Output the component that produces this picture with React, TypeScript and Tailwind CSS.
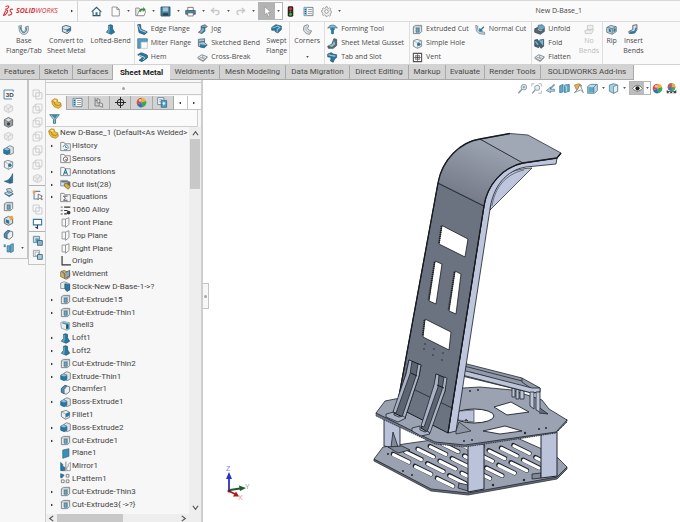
import type { ReactNode } from "react";
import clsx from "clsx";

const BLUE = "#2878a2";
const PALE = "#8fc0d8";
const DARK = "#3f4d57";
const GREY = "#8b9298";

/* All glyphs are drawn on a 16 x 16 grid. */
const glyphs: Record<string, ReactNode> = {
  home: (
    <>
      <path d="M3 8v6h10V8" fill="#fff" stroke={DARK} strokeWidth="1.5" />
      <path d="M1 8.500 8 2l7 6.500" fill="none" stroke="#2a5f80" strokeWidth="1.800" />
      <path d="M6.500 9h3v5h-3z" fill={BLUE} />
    </>
  ),
  page: <path d="M3 1.500h7l3.500 3.500v9.500H3zM10 1.500V5h3.500" fill="#fff" stroke="#8a8a8a" strokeWidth="1.300" />,
  open: (
    <>
      <path d="M1 14V3h5l1 2h6v9z" fill="#e9e9e9" stroke="#8a8a8a" strokeWidth="1.300" />
      <path d="M3 14l3-7h10l-3 7z" fill="#fff" stroke="#777" />
      <path d="M6 8c0-4 3-5 6-4V1.500L15.500 5 12 8V6c-2-.5-3 0-4 3z" fill="#3e8c3e" />
    </>
  ),
  save: (
    <>
      <path d="M1.500 1.500h13v13h-13z" fill="#3d81a5" stroke="#355566" strokeWidth="1.400" />
      <path d="M4 2h8v6H4z" fill="#9fc4d7" />
      <path d="M4 10.500h8V14H4z" fill="#294554" />
    </>
  ),
  print: (
    <>
      <path d="M4 2h8v5H4z" fill="#fff" stroke="#666" strokeWidth="1.200" />
      <path d="M1 6.500h14V12H1z" fill="#4c84a3" stroke="#37505d" />
      <path d="M4 10h8v4.500H4z" fill="#fff" stroke="#555" />
    </>
  ),
  undo: <path d="M6 3 2 6.500 6 10M2.500 6.500H10c4 0 4 6 0 6H8" fill="none" stroke="#c9c9c9" strokeWidth="2" />,
  redo: <path d="M10 3l4 3.500-4 3.500M13.500 6.500H6c-4 0-4 6 0 6" fill="none" stroke="#c9c9c9" strokeWidth="2" />,
  cursor: <path d="M4 1v12l3-3 2 5 2.200-1L9 9.500h4z" fill="#fff" stroke="#888" strokeWidth=".8" />,
  traffic: (
    <>
      <rect x="4" y=".5" width="8" height="15" rx="2" fill="#222" />
      <circle cx="8" cy="4" r="2.200" fill="#d23a32" />
      <circle cx="8" cy="8" r="1.600" fill="#8a7430" />
      <circle cx="8" cy="12" r="2.200" fill="#3fae49" />
    </>
  ),
  list: (
    <>
      <path d="M1.500 2h13v12h-13z" fill="#fff" stroke="#667985" strokeWidth="1.300" />
      <path d="M2 2h4v12H2z" fill={PALE} />
      <path d="M2.500 5h2M2.500 8h2M2.500 11h2" stroke="#226489" strokeWidth="1.500" />
      <path d="M7.500 5h5.500M7.500 8h5.500M7.500 11h5.500" stroke={GREY} strokeWidth="1.300" />
    </>
  ),
  gear: (
    <>
      <path
        d="M7 1h2l.4 2 1.700.7 1.700-1.200 1.500 1.500-1.200 1.700.7 1.700 2 .4v2l-2 .4-.7 1.500 1.200 1.800-1.500 1.400-1.700-1.100-1.700.7L9 15H7l-.4-1.500-1.700-.7-1.700 1.100L1.700 12.500l1.200-1.800-.7-1.500-1.700-.4v-2l1.700-.4.7-1.700L1.700 4l1.500-1.500 1.700 1.200L6.600 3z"
        fill="#f2f2f2"
        stroke="#858585"
      />
      <circle cx="8" cy="8" r="2.600" fill="#fff" stroke="#858585" strokeWidth="1.200" />
    </>
  ),
  baseFlange: (
    <>
      <path d="M1 3l4-1v6c1 4 5 4 6 0V4l4-1v6c-1 8-11 8-13 1z" fill="#d5dce0" stroke="#6b7880" />
      <path d="M3 4l2 6c2 4 6 3 7-1V5" fill="none" stroke={BLUE} strokeWidth="1.400" />
    </>
  ),
  convert: (
    <>
      <path d="M2 4l5-2 7 2v6l-5 4-7-3z" fill="#dbe2e6" stroke={DARK} strokeWidth="1.200" />
      <path d="M2 6l6 2 6-3v4l-6 3V9L2 7z" fill={BLUE} />
    </>
  ),
  loft: (
    <>
      <path d="M5 2l3-1 3 1v5l3 5-5 3-7-3 3-4z" fill={BLUE} stroke="#245166" />
      <path d="M5 3v6l-2 3 3 1 1-4V3z" fill="#73a7bf" />
    </>
  ),
  edge: (
    <>
      <path d="M1 1l4-.5 1 7 9 4-4 4-8-3z" fill={BLUE} stroke="#244a5d" />
      <path d="M2 2l3 7 8 3" fill="none" stroke="#a6cadc" strokeWidth="1.500" />
    </>
  ),
  miter: (
    <>
      <path d="M1 1h14v4H5v10H1z" fill="#5b9dbe" stroke="#397691" />
      <path d="M6 6h9v9H6z" fill="#fff" stroke="#aabac2" />
    </>
  ),
  hem: (
    <>
      <path d="M1 4l5-3 8 3c3 2 2 5-1 6l-6 4-4-2 5-4z" fill={BLUE} stroke="#1e4a60" />
      <path d="M3 5l6 2c3 1 3 2 0 4" fill="none" stroke="#d3e4ec" strokeWidth="1.400" />
    </>
  ),
  jog: (
    <>
      <path d="M6 3l6-2 3 3-4 2v4l-4 4-5-2 4-3V5z" fill="#9caab2" stroke={DARK} />
      <path d="M6 5h5v5l-4 3" fill="none" stroke={BLUE} strokeWidth="2" />
    </>
  ),
  sketchBend: (
    <>
      <path d="M2 2l9-1v6l4 3-4 4-9-2z" fill="#b8c4cb" stroke={DARK} />
      <path d="M3 6l8-1M5 10l8 1-3 3-5-1z" fill={BLUE} stroke={BLUE} strokeWidth="1.500" />
    </>
  ),
  sheet: (
    <>
      <path d="M1 8l6-4 8 3-6 6z" fill="#f1f1f1" stroke="#78838a" strokeWidth="1.300" />
      <path d="M4 8l8 1M8 5l1 6M1 9.500l8 4.500 6-6" fill="none" stroke="#78838a" />
    </>
  ),
  swept: (
    <>
      <path d="M1 5l6-4 8 2v5l-5 5-4-2V9L1 9z" fill={BLUE} stroke="#285269" />
      <path d="M2 6l8-3 3 2-4 3v4" fill="none" stroke="#9bc5d8" strokeWidth="1.500" />
    </>
  ),
  corners: (
    <>
      <path d="M3 3l5-2 2 2c-3 3-2 6 4 7l-3 5C3 14 1 9 3 3z" fill="#e0e2e4" stroke="#7c848a" strokeWidth="1.300" />
      <path d="M6 4c-1 5 1 8 6 8" fill="none" stroke="#9da4a9" />
    </>
  ),
  forming: (
    <>
      <path d="M1 6c3-6 11-6 14 0l-4-1v3H5V5z" fill="#86b6cd" stroke="#3c718b" />
      <path d="M6 5h4v9l-2 1-2-1z" fill={BLUE} />
    </>
  ),
  gusset: (
    <>
      <path d="M10 1l4 1v9l-5 4H2l-1-3 6-3z" fill="#5c6a73" stroke="#37434b" />
      <path d="M10 3c0 5-3 8-8 8l5 2 5-4z" fill={PALE} />
    </>
  ),
  tabSlot: (
    <>
      <path d="M1 3l5-2 3 2 5 1v4l-3 2-2 5-4-2 1-5-5-1z" fill={BLUE} stroke="#2b5267" />
      <path d="M2 4l4 1 6 1" stroke="#b1d2e1" strokeWidth="1.500" />
    </>
  ),
  cut: (
    <>
      <path d="M2 4l3-2h9v9l-3 3H2z" fill="#e5e8ea" stroke="#69747b" strokeWidth="1.200" />
      <path d="M3 4.500h8V14M11 4l3-2" fill="none" stroke="#939ca2" />
      <path d="M6 6h4v6H6z" fill="#6fa9c6" stroke="#356b85" />
    </>
  ),
  hole: (
    <>
      <path d="M2 4l5-2 7 2v8l-6 3-6-3z" fill="#eef0f1" stroke="#727c82" strokeWidth="1.200" />
      <path d="M2 4l6 3 6-3M8 7v8" fill="none" stroke="#9ba3a8" />
      <circle cx="10" cy="9" r="2.600" fill={BLUE} />
    </>
  ),
  vent: (
    <>
      <path d="M2 2h12v12H2z" fill="#fff" stroke="#545454" strokeWidth="1.600" />
      <path d="M5 5h6v6H5zM8 3v10M3 8h10" fill="none" stroke="#565656" />
      <path d="M6.500 6.500h3v3h-3z" fill="#444" />
    </>
  ),
  normal: (
    <>
      <path d="M1 2l3 1v5l4 3 6 1v3l-8-1-4-4z" fill="#ccd6dc" stroke="#6b7880" />
      <path d="M13 4l-5 5M7 6v4h4" fill="none" stroke={BLUE} strokeWidth="1.800" />
    </>
  ),
  unfold: (
    <>
      <path d="M1 7l4-2v4l5 2 5-4v4l-6 4-8-3z" fill="#56666f" stroke="#344149" />
      <path d="M6 2l6-1 3 3v3l-6 2-3-2z" fill="#71a8c4" stroke="#355e73" />
    </>
  ),
  fold: (
    <>
      <path d="M1 3l4-1 3 4V3l6-1v10l-4 3-3-5v4l-6-2z" fill="#466171" stroke="#324853" />
      <path d="M8 3l4 5V3M2 5l4 5" stroke="#7dbddd" strokeWidth="2" />
    </>
  ),
  noBends: <path d="M5 2h8v5l-3 2H5zM1 10l4-2h9l-3 6H2z" fill="#eee" stroke="#c9c9c9" strokeWidth="1.300" />,
  rip: (
    <>
      <path d="M1 5l6-3 8 2v7l-6 4-8-3z" fill="#c1d1da" stroke="#52616a" />
      <path d="M2 5l7 2 5-3M9 7v7" fill="none" stroke="#425965" />
      <path d="M4 7l3 1v4l-3-1zM11 7l3-1v4l-3 2z" fill={BLUE} />
    </>
  ),
  insert: (
    <>
      <path d="M7 2l6-1v7l-3 5-8 1-1-3 6-3z" fill="#dce1e4" stroke="#46535b" strokeWidth="1.200" />
      <path d="M2 11l7-1 2-5 2 1-3 7-7 1z" fill={BLUE} />
    </>
  ),
  threeD: (
    <>
      <path d="M15 4V1.500H1.500v13H13" fill="none" stroke="#4d87a5" strokeWidth="1.400" />
      <text x="4" y="11.500" fontSize="9" fontWeight="700" fontFamily="Liberation Sans, sans-serif" fill="#444">3D</text>
    </>
  ),
  ghost: (
    <>
      <path d="M2 5l6-3 6 3v6l-6 3-6-3z" fill="#ededed" stroke="#cdcdcd" strokeWidth="1.300" />
      <path d="M2 5l6 3 6-3M8 8v6M4 12l8-8" fill="none" stroke="#cdcdcd" />
    </>
  ),
  darkCube: (
    <>
      <path d="M2 4l6-3 6 3v8l-6 3-6-3z" fill="#9b9fa2" stroke="#5b6063" strokeWidth="1.200" />
      <path d="M2 4l6 3 6-3-6-3z" fill="#e0e2e3" stroke="#6a6f72" />
      <circle cx="8" cy="10" r="2.400" fill="#3f4447" />
    </>
  ),
  boss: (
    <>
      <path d="M6 3l4-2 5 2v9l-5 2-4-2z" fill="#dfe5e8" stroke="#6b767d" strokeWidth="1.100" />
      <path d="M1 6l4-2 5 2v6l-4 2-5-2z" fill={BLUE} stroke="#245d7b" />
      <path d="M1 6l5 2 4-2-5-2z" fill={PALE} />
    </>
  ),
  chamfer: (
    <>
      <path d="M2 6l5-4 7 2v7l-5 4-7-3z" fill="#edf0f2" stroke="#606c73" strokeWidth="1.200" />
      <path d="M2 7l5-5 3 1-4 5v6l-4-2z" fill="#4d91b3" stroke="#3a5c6c" />
    </>
  ),
  rib: <path d="M14 1v13l-4 1-8-3c6-1 9-4 12-11zM10 9v6" fill={BLUE} stroke="#3b515d" />,
  bentPlate: (
    <>
      <path d="M2 9l6-3 7 4-6 4zM5 3l6-1 3 5-6 2z" fill="#cfdae0" stroke="#5a7483" strokeWidth="1.200" />
      <path d="M3 10l6 3 5-3" fill="none" stroke={BLUE} strokeWidth="1.600" />
    </>
  ),
  wizard: (
    <>
      <path d="M2 5l6-3 6 3v7l-6 3-6-3z" fill="#d8dee1" stroke="#4b565c" strokeWidth="1.200" />
      <path d="M4 6l5 2v5l-5-2z" fill={BLUE} />
      <path d="M8 2l6-1 1 4-4 3z" fill="#e9a739" />
    </>
  ),
  planeBlue: <path d="M4 3l9-2v11l-9 3z" fill="#3b8eb5" stroke="#286a8c" />,
  refPlane: (
    <>
      <path d="M6 4h4v9H6zM11 2l4-1v11l-4 2z" fill="#66a8c6" stroke="#2e6e8d" />
      <path d="M1 2h3v4H1z" fill="#4b8faf" />
    </>
  ),
  wire: <path d="M1.500 5.500h9v9h-9zM5.500 1.500h9v9h-9zM1.500 5.500l4-4M10.500 14.500l4-4" fill="none" stroke="#c6c8ca" strokeWidth="1.200" />,
  wireFilled: (
    <path d="M1.500 1.500h9v9h-9zM5.500 5.500h9v9h-9z" fill="#f7f7f7" stroke="#c6c8ca" strokeWidth="1.300" />
  ),
  sketchCursor: (
    <>
      <path d="M12 2H3v11h6" fill="none" stroke="#5e8599" strokeWidth="1.500" />
      <path d="M9 6v8l2-2 4 2-2-4 2-1z" fill="#fff" stroke="#444" />
      <path d="M1 1h4v4H1z" fill="#e6a95a" />
    </>
  ),
  monitor: (
    <>
      <path d="M2 2h12v8H2z" fill="#fff" stroke="#39789a" strokeWidth="1.600" />
      <path d="M8 10v5l-3-2" fill="none" stroke="#333" strokeWidth="1.600" />
    </>
  ),
  group: (
    <>
      <path d="M2 2h9v9H2z" fill="#c7dbe5" stroke="#597f93" strokeWidth="1.200" />
      <path d="M5 5h5v5H5z" fill="#5e98b6" />
      <path d="M8 8h7v7H8z" fill="#8bb5ca" stroke="#32647e" strokeWidth="1.200" />
    </>
  ),
  ungroup: (
    <>
      <path d="M2 2h9v9H2z" fill="#f3f3f3" stroke="#8b979e" strokeWidth="1.200" />
      <path d="M4.500 4.500h5v5h-5z" fill="#fff" stroke="#8b979e" />
      <path d="M8 8h7v7H8z" fill="#a9cadb" stroke="#32647e" strokeWidth="1.200" />
    </>
  ),
  part: (
    <>
      <path d="M1 4l4-3 4 1 1 4 4 1 1 5-4 3-6-2-3-4z" fill="#edbd38" stroke="#a27a1c" />
      <path d="M2 5l3 1 1 4 5 1 3-2" fill="none" stroke="#a87b18" strokeWidth="1.200" />
      <circle cx="6" cy="4" r="1.300" fill="#fff0a8" />
    </>
  ),
  config: (
    <>
      <path d="M3 1v12h6M3 5h5" fill="none" stroke="#777" strokeWidth="1.300" />
      <path d="M6 2l4 2v4l-4 1zM9 8l5 2v5l-5-2z" fill="#ddd" stroke="#666" />
    </>
  ),
  target: (
    <>
      <circle cx="8" cy="8" r="4.800" fill="none" stroke="#222" strokeWidth="1.400" />
      <path d="M8 0v16M0 8h16" stroke="#222" strokeWidth="1.400" />
    </>
  ),
  ball: (
    <>
      <path d="M8 8V1a7 7 0 0 1 6.600 4.700z" fill="#f0b32f" />
      <path d="M8 8l6.600-2.300A7 7 0 0 1 9 15z" fill="#3fa45c" />
      <path d="M8 8l1 7a7 7 0 0 1-7.500-4.500z" fill="#356fae" />
      <path d="M8 8L1.500 10.500A7 7 0 0 1 8 1z" fill="#d84b3e" />
      <circle cx="6" cy="5" r="2" fill="#fff" opacity=".65" />
    </>
  ),
  scene: (
    <>
      <circle cx="8" cy="6" r="5.500" fill="#3f77b5" />
      <path d="M8 6V.5A5.500 5.500 0 0 1 13.500 7z" fill="#efb138" />
      <path d="M8 6L2.500 7A5.500 5.500 0 0 1 8 .5z" fill="#d95247" />
      <path d="M8 6l5.500 1A5.500 5.500 0 0 1 8 11.500z" fill="#47a65d" />
      <path d="M1 10v5h14v-5l-3 2H4z" fill="#444" />
      <path d="M4 13h2v2H4zM9 13h2v2H9z" fill="#fff" />
    </>
  ),
  sheets: (
    <>
      <path d="M1 1h9v10H1z" fill="#fff" stroke="#58788a" strokeWidth="1.200" />
      <path d="M3 4h5M3 7h4" stroke="#58788a" />
      <path d="M6 5h8v10H6z" fill="#4e9bc2" stroke="#286684" />
      <path d="M8 9h4M10 7v5" stroke="#fff" strokeWidth="1.500" />
    </>
  ),
  filter: (
    <>
      <path d="M1 2.500h14L9.500 9v6h-3V9z" fill="#eaf3f7" stroke="#48707f" strokeWidth="1.400" />
      <path d="M3 3h10L9 8v6H8V8z" fill="#3d86aa" />
    </>
  ),
  origin: <path d="M3 1v12h12M3 13h.1" fill="none" stroke="#333" strokeWidth="1.700" strokeLinecap="square" />,
  alloy: (
    <>
      <path d="M1 3h3M1 8h3M1 13h3" stroke="#888" strokeWidth="2" />
      <path d="M6 3h9M6 8h5M6 13h4" stroke="#333" strokeWidth="1.800" />
      <circle cx="12.500" cy="11" r="2.700" fill="#333" />
    </>
  ),
  plane: <path d="M8 3H3v10h5M8 3l5-2v10l-5 4z" fill="none" stroke="#85898c" strokeWidth="1.200" />,
  cutList: (
    <>
      <path d="M1 2h10v8H1z" fill="#dce3e7" stroke="#66737b" />
      <path d="M2 3h8v2H2z" fill="#486b7e" />
      <path d="M6 7l4-1 5 5-3 4-5-4z" fill="#e2aa3b" stroke="#75561d" />
      <path d="M11 3l4 1v7l-4-3z" fill="#5e6b72" />
    </>
  ),
  weld: (
    <>
      <path d="M1 4l5-2 8 4v6l-5 3-8-4z" fill="#e2b34c" stroke="#6d592d" />
      <path d="M2 3l5 4v7M8 5l6-3v8l-5 3" fill="#92a6b2" stroke="#52636e" strokeWidth="1.300" />
    </>
  ),
  stock: (
    <>
      <path d="M1 3l5-2 8 3v9l-4 2-3-4H1z" fill="#e8edef" stroke="#667780" />
      <path d="M7 4l7 1v8l-4 2-3-4z" fill={BLUE} stroke="#235873" />
    </>
  ),
  shell: (
    <>
      <path d="M1 4l4-2 9 2v9l-4 2-8-3z" fill="#e8edef" stroke="#7b8a92" />
      <path d="M4 3l9 2v8l-4 1V7L3 5z" fill="#4f9bbf" />
      <path d="M9 7l3-1v6l-3 1z" fill="#1d506a" />
    </>
  ),
  fillet: (
    <>
      <path d="M2 4l7-2 5 3v7l-6 3-6-4z" fill="#edf0f2" stroke="#68747b" strokeWidth="1.200" />
      <path d="M8 7l6-3v4c-1 2-2 3-5 4z" fill={BLUE} />
      <path d="M2 4l6 3v7" fill="none" stroke="#85929a" />
    </>
  ),
  mirror: (
    <>
      <path d="M1 2l3 3v3l3 1v5H1z" fill={BLUE} stroke="#23617f" />
      <path d="M8.500 1v14" stroke="#555" />
      <path d="M15 2l-3 3v3l-2 1v5h5z" fill="#fff" stroke="#777" />
    </>
  ),
  pattern: (
    <>
      <path d="M1 1l5 2-3 4H1z" fill={BLUE} stroke="#23617f" />
      <path d="M9 2h4v4H9zM2 10h4v4H2zM9 10h4v4H9z" fill="#fff" stroke="#777" strokeWidth="1.300" />
    </>
  ),
  zoomFit: (
    <>
      <circle cx="10" cy="6" r="4" fill="#e6f1f6" stroke="#8297a1" strokeWidth="1.300" />
      <path d="M7 9l-5 6" stroke="#8297a1" strokeWidth="2" />
      <path d="M8 6h4M10 4v4" stroke="#4a87a4" />
    </>
  ),
  zoomArea: (
    <>
      <path d="M1 5V1h4M11 1h4v4M15 11v4h-4" fill="none" stroke="#a3b3bb" strokeWidth="1.200" />
      <circle cx="9" cy="7" r="3.700" fill="#e6f1f6" stroke="#8297a1" strokeWidth="1.300" />
      <path d="M6 10l-4 5" stroke="#8297a1" strokeWidth="2" />
    </>
  ),
  prevView: (
    <>
      <path d="M14 2L7 9" stroke="#7b9dad" strokeWidth="2.500" />
      <path d="M8 6l-6 5 6 3v-2h6V9H8z" fill="#b8d3df" stroke="#52798b" />
    </>
  ),
  section: (
    <>
      <path d="M1 4l5-2v11l-5 1zM8 3l7-1v10l-7 2z" fill="#5faccb" stroke="#366f88" />
      <path d="M8 4l3 1v8" fill="none" stroke="#d6e7ef" />
    </>
  ),
  dynamic: (
    <>
      <path d="M2 3l7-2 4 3-8 6z" fill="#efad4a" stroke="#a87834" />
      <path d="M2 14l5-5 3-7 5 12-4-4z" fill="#fff" stroke="#6b8795" strokeWidth="1.200" />
    </>
  ),
  display: (
    <>
      <path d="M1 5l4-3h10v9l-4 4H1z" fill="#bedbe7" stroke="#567c8e" strokeWidth="1.200" />
      <path d="M2 6h8v8H2z" fill="#5ba8c9" />
      <path d="M10 6l4-4M10 6v8" stroke="#436d80" />
    </>
  ),
  styleCube: (
    <>
      <path d="M2 3l6-2 6 2v9l-6 3-6-3z" fill="#a4d1e2" stroke="#547f92" strokeWidth="1.200" />
      <path d="M8 5l6-2v9l-6 3z" fill="#e6f0f4" stroke="#547f92" />
    </>
  ),
  eye: (
    <>
      <path d="M1 8c4-6 10-6 14 0-4 5-10 5-14 0z" fill="#fff" stroke="#555" />
      <circle cx="8" cy="7.800" r="3" fill="#222" />
    </>
  ),
};

const folder = (mark: ReactNode) => (
  <>
    <path d="M1 14V2h5l1 2h8v10z" fill="#f7f7f7" stroke="#82878a" strokeWidth="1.300" />
    {mark}
  </>
);
glyphs.history = folder(<path d="M8 7v2.500h2M4.500 9a3.700 3.700 0 1 1 1 2.800" fill="none" stroke="#3a7897" strokeWidth="1.300" />);
glyphs.sensors = folder(
  <>
    <circle cx="8" cy="9" r="3.200" fill="#fff" stroke="#555" strokeWidth="1.200" />
    <path d="M8 9l2 2" stroke="#d04a3b" strokeWidth="1.800" />
  </>
);
glyphs.annotations = folder(<path d="M5 13l3-8 3 8M6 10h4" fill="none" stroke="#23739f" strokeWidth="1.500" />);
glyphs.equations = folder(<path d="M11 6H5l3 3-3 3h6" fill="none" stroke="#444" strokeWidth="1.300" />);

function Glyph({ name }: { name: string }) {
  return (
    <svg viewBox="0 0 16 16" className="size-[11px] shrink-0" fill="none" aria-hidden="true">
      {glyphs[name]}
    </svg>
  );
}

function Caret() {
  return (
    <svg viewBox="0 0 4 3" className="h-[2px] w-[3px] shrink-0" aria-hidden="true">
      <path d="M0 0h4L2 3z" fill="#555" />
    </svg>
  );
}

function Arrow({ dir }: { dir: "left" | "right" }) {
  return (
    <svg viewBox="0 0 3 4" className="h-1 w-[2px] shrink-0" aria-hidden="true">
      <path d={dir === "right" ? "M0 0v4l3-2z" : "M3 0v4L0 2z"} fill="#222" />
    </svg>
  );
}

function Chevron({ d }: { d: string }) {
  return (
    <svg viewBox="0 0 8 8" className="size-[7px] shrink-0" aria-hidden="true">
      <path d={d} fill="none" stroke="#555" strokeWidth="1.400" />
    </svg>
  );
}

const quickActions = ["page", "open", "save", "print", "undo", "redo"];

function TitleBar() {
  return (
    <header className="flex h-[22px] shrink-0 items-center border-y border-t-[#d9d9d9] border-b-[#dcdcdc] bg-[#fafafa]">
      <div className="flex h-full w-[78px] items-center border-r border-[#d4d4d4] pl-[3px]">
        <svg viewBox="0 0 22 24" className="h-[12px] w-[11px]" aria-hidden="true">
          <path
            d="M5 3c4-2 8-1 6 2-1 2-4 3-6 3M4 10c6-1 7 3 2 8-1 2-4 3-5 3l4-9M20 9c-4-2-8 1-5 4 5 4 2 8-5 7"
            fill="none"
            stroke="#d6343a"
            strokeWidth="2.200"
          />
        </svg>
        <span className="ml-[2px] text-[7px] italic text-[#d6343a]">
          <b>SOLID</b>WORKS
        </span>
        <button aria-label="Show menu" className="mr-1 ml-auto">
          <Arrow dir="right" />
        </button>
      </div>
      <button aria-label="Home" className="mr-[2px] ml-[13px]">
        <Glyph name="home" />
      </button>
      <div className="ml-1 flex items-center">
        {quickActions.map((name) => (
          <button key={name} aria-label={name} className="flex w-[25px] items-center gap-[6px] pl-[2px]">
            <Glyph name={name} />
            <Caret />
          </button>
        ))}
      </div>
      <button aria-label="Select" className="flex h-[18px] border border-[#b5b5b5]">
        <span className="flex h-full w-4 items-center justify-center bg-[#b3b3b3]">
          <Glyph name="cursor" />
        </span>
        <span className="flex h-full w-[7px] items-center justify-center bg-white">
          <Caret />
        </span>
      </button>
      <div className="ml-[2px] flex items-center gap-[7px]">
        <button aria-label="Rebuild"><Glyph name="traffic" /></button>
        <button aria-label="File properties"><Glyph name="list" /></button>
        <button aria-label="Options" className="flex items-center gap-[6px]">
          <Glyph name="gear" />
          <Caret />
        </button>
      </div>
      <h1 className="mr-[98px] ml-auto text-[7px] text-[#444]">New D-Base_1</h1>
    </header>
  );
}

function BigTool({ icon, lines, menu, disabled }: { icon: string; lines: string[]; menu?: boolean; disabled?: boolean }) {
  return (
    <button
      disabled={disabled}
      className={clsx("flex flex-col items-center self-start leading-[10px]", disabled && "text-[#bcbcbc]")}
    >
      <span className="flex h-[14px] items-center">
        <Glyph name={icon} />
      </span>
      {lines.map((line) => (
        <span key={line}>{line}</span>
      ))}
      {menu && (
        <span className="mt-[10px]">
          <Caret />
        </span>
      )}
    </button>
  );
}

function ToolColumn({ tools }: { tools: [string, string][] }) {
  return (
    <div className="flex flex-col">
      {tools.map(([icon, label]) => (
        <button key={label} className="flex h-[14px] items-center gap-[3px]">
          <Glyph name={icon} />
          {label}
        </button>
      ))}
    </div>
  );
}

function Group({ children, className }: { children: ReactNode; className?: string }) {
  return <div className={clsx("flex h-full border-r border-[#dedede]", className)}>{children}</div>;
}

function Ribbon() {
  return (
    <div className="flex h-[43px] shrink-0 overflow-hidden border-b border-[#d2d2d2] bg-[#fafafa] text-[7px] whitespace-nowrap text-[#4a4a4a]">
      <Group className="gap-[5px] pr-[3px] pl-[6px]">
        <BigTool icon="baseFlange" lines={["Base", "Flange/Tab"]} />
        <BigTool icon="convert" lines={["Convert to", "Sheet Metal"]} />
        <BigTool icon="loft" lines={["Lofted-Bend"]} />
      </Group>
      <Group className="gap-[6px] px-[2px]">
        <ToolColumn tools={[["edge", "Edge Flange"], ["miter", "Miter Flange"], ["hem", "Hem"]]} />
        <ToolColumn tools={[["jog", "Jog"], ["sketchBend", "Sketched Bend"], ["sheet", "Cross-Break"]]} />
        <BigTool icon="swept" lines={["Swept", "Flange"]} />
      </Group>
      <Group className="px-1">
        <BigTool icon="corners" lines={["Corners"]} menu />
      </Group>
      <Group className="pr-[5px] pl-[2px]">
        <ToolColumn tools={[["forming", "Forming Tool"], ["gusset", "Sheet Metal Gusset"], ["tabSlot", "Tab and Slot"]]} />
      </Group>
      <Group className="gap-[6px] pr-[5px] pl-[2px]">
        <ToolColumn tools={[["cut", "Extruded Cut"], ["hole", "Simple Hole"], ["vent", "Vent"]]} />
        <ToolColumn tools={[["normal", "Normal Cut"]]} />
      </Group>
      <Group className="gap-2 pr-[3px] pl-[2px]">
        <ToolColumn tools={[["unfold", "Unfold"], ["fold", "Fold"], ["sheet", "Flatten"]]} />
        <BigTool icon="noBends" lines={["No", "Bends"]} disabled />
      </Group>
      <div className="flex gap-[6px] pl-[3px]">
        <BigTool icon="rip" lines={["Rip"]} />
        <BigTool icon="insert" lines={["Insert", "Bends"]} />
      </div>
    </div>
  );
}

const commandTabs = [
  { label: "Features", width: "w-[40px]" },
  { label: "Sketch", width: "w-[33px]" },
  { label: "Surfaces", width: "w-[40px]" },
  { label: "Sheet Metal", width: "w-[57px]" },
  { label: "Weldments", width: "w-[50px]" },
  { label: "Mesh Modeling", width: "w-[66px]" },
  { label: "Data Migration", width: "w-[64px]" },
  { label: "Direct Editing", width: "w-[59px]" },
  { label: "Markup", width: "w-[37px]" },
  { label: "Evaluate", width: "w-[39px]" },
  { label: "Render Tools", width: "w-[56px]" },
  { label: "SOLIDWORKS Add-Ins", width: "w-[93px]" },
];

function CommandTabs() {
  return (
    <nav className="flex h-[15px] shrink-0 bg-white font-[Roboto,sans-serif] text-[8px] whitespace-nowrap">
      {commandTabs.map(({ label, width }) => (
        <button
          key={label}
          className={clsx(
            "flex shrink-0 items-center justify-center",
            width,
            label === "Sheet Metal"
              ? "bg-[#fafafa] font-bold text-[#222]"
              : "border-r border-b border-r-[#a9a9a9] border-b-[#a9a9a9] bg-[#d3d3d3] text-[#4a4a4a]"
          )}
        >
          {label}
        </button>
      ))}
    </nav>
  );
}

const featureTools = [
  "threeD", "ghost", "darkCube", "ghost", "boss", "hole", "rib", "bentPlate", "cut", "wizard", "chamfer", "refPlane",
];
const viewTools = ["wireFilled", "wire", "wire", "wire", "wire", "wire", "ghost"];

function ToolStrips() {
  return (
    <>
      <div className="flex w-7 shrink-0 flex-col self-start border-r border-b border-[#c4c4c4] pt-[7px] pb-[3px]">
        {featureTools.map((name, i) => (
          <button key={i} aria-label={`Feature tool ${i + 1}`} className="flex h-[14px] items-center gap-[7px] pl-[3px]">
            <Glyph name={name} />
            {name === "refPlane" && <Caret />}
          </button>
        ))}
      </div>
      <div className="flex w-[17px] shrink-0 flex-col items-center self-start border-b border-l border-[#c4c4c4] pt-[7px] pb-[3px]">
        {viewTools.map((name, i) => (
          <button key={i} aria-label={`View tool ${i + 1}`} className="flex h-[14px] items-center">
            <Glyph name={name} />
          </button>
        ))}
        <hr className="mb-[2px] w-full border-[#b0b0b0]" />
        <button aria-label="Sketch" className="flex h-[14px] items-center"><Glyph name="sketchCursor" /></button>
        <button aria-label="Drawing" className="flex h-[14px] items-center"><Glyph name="wireFilled" /></button>
        <button aria-label="Screen" className="flex h-[14px] items-center"><Glyph name="monitor" /></button>
        <hr className="my-px w-full border-[#b0b0b0]" />
        <button aria-label="Group" className="flex h-[14px] items-center"><Glyph name="group" /></button>
        <button aria-label="Ungroup" className="flex h-[14px] items-center"><Glyph name="ungroup" /></button>
      </div>
    </>
  );
}

interface TreeItem {
  label: string;
  icon: string;
  expandable?: boolean;
}

const treeItems: TreeItem[] = [
  { label: "History", icon: "history", expandable: true },
  { label: "Sensors", icon: "sensors" },
  { label: "Annotations", icon: "annotations", expandable: true },
  { label: "Cut list(28)", icon: "cutList", expandable: true },
  { label: "Equations", icon: "equations", expandable: true },
  { label: "1060 Alloy", icon: "alloy" },
  { label: "Front Plane", icon: "plane" },
  { label: "Top Plane", icon: "plane" },
  { label: "Right Plane", icon: "plane" },
  { label: "Origin", icon: "origin" },
  { label: "Weldment", icon: "weld" },
  { label: "Stock-New D-Base-1->?", icon: "stock" },
  { label: "Cut-Extrude15", icon: "cut", expandable: true },
  { label: "Cut-Extrude-Thin1", icon: "cut", expandable: true },
  { label: "Shell3", icon: "shell" },
  { label: "Loft1", icon: "loft", expandable: true },
  { label: "Loft2", icon: "loft", expandable: true },
  { label: "Cut-Extrude-Thin2", icon: "cut", expandable: true },
  { label: "Extrude-Thin1", icon: "boss", expandable: true },
  { label: "Chamfer1", icon: "chamfer" },
  { label: "Boss-Extrude1", icon: "boss", expandable: true },
  { label: "Fillet1", icon: "fillet" },
  { label: "Boss-Extrude2", icon: "boss", expandable: true },
  { label: "Cut-Extrude1", icon: "cut", expandable: true },
  { label: "Plane1", icon: "planeBlue" },
  { label: "Mirror1", icon: "mirror" },
  { label: "LPattern1", icon: "pattern" },
  { label: "Cut-Extrude-Thin3", icon: "cut", expandable: true },
  { label: "Cut-Extrude3{ ->?}", icon: "cut", expandable: true },
];

const managerTabs = ["part", "list", "config", "target", "ball", "sheets"];

function FeatureTree() {
  return (
    <aside className="flex min-w-0 flex-1 flex-col border-l border-[#cfcfcf] font-[Roboto,sans-serif] text-[8px] text-[#444]">
      <div className="mt-[2px] flex h-[13px] shrink-0 items-center justify-center border-y border-[#c9c9c9]">
        <span className="size-[3px] rounded-full bg-[#a5a5a5]" />
      </div>
      <div className="mt-px flex h-[14px] shrink-0">
        {managerTabs.map((name) => (
          <button
            key={name}
            aria-label={`${name} manager`}
            className={clsx(
              "flex flex-1 items-center justify-center border-r border-[#a8a8a8]",
              name === "part" ? "bg-[#f7f7f7]" : "border-b bg-[#d3d3d3]"
            )}
          >
            <Glyph name={name} />
          </button>
        ))}
        <button aria-label="Previous" className="flex w-[14px] items-center justify-center border-r border-b border-[#c4c4c4] bg-white">
          <Arrow dir="left" />
        </button>
        <button aria-label="Next" className="flex w-[13px] items-center justify-center border-b border-[#c4c4c4] bg-white">
          <Arrow dir="right" />
        </button>
      </div>
      <label className="mr-[3px] flex h-[17px] shrink-0 items-center border-r border-b border-[#cfcfcf] bg-[#fbfbfb] pl-[3px]">
        <Glyph name="filter" />
        <input aria-label="Filter" className="min-w-0 flex-1 bg-transparent outline-none" />
      </label>
      <div className="flex min-h-0 flex-1">
        <ul className="grid min-w-0 flex-1 auto-rows-fr overflow-hidden whitespace-nowrap pb-[3px]">
          <li className="flex min-h-0 items-center gap-px pl-[2px]">
            <Glyph name="part" />
            New D-Base_1 (Default&lt;As Welded&gt;
          </li>
          {treeItems.map(({ label, icon, expandable }) => (
            <li key={label} className="flex min-h-0 items-center pl-[5px]">
              <span className="flex w-[9px] shrink-0">
                {expandable && (
                  <button aria-label={`Expand ${label}`}>
                    <Arrow dir="right" />
                  </button>
                )}
              </span>
              <Glyph name={icon} />
              <span className="ml-px">{label}</span>
            </li>
          ))}
        </ul>
        <div className="flex w-3 shrink-0 flex-col items-center bg-[#eeeeee]">
          <span className="flex h-3 items-center"><Chevron d="M1 6l3-4 3 4" /></span>
          <span className="h-[50px] w-[10px] bg-[#c8c8c8]" />
          <span className="mt-auto flex h-[14px] items-center"><Chevron d="M1 2l3 4 3-4" /></span>
        </div>
      </div>
      <div className="flex h-2 shrink-0 items-center bg-[#eeeeee] pl-[2px]">
        <Chevron d="M6 1L2 4l4 3" />
        <span className="ml-[2px] h-full w-[66px] bg-[#c8c8c8]" />
        <span className="mr-[14px] ml-auto flex"><Chevron d="M2 1l4 3-4 3" /></span>
      </div>
    </aside>
  );
}

/* Slots of the bottom plate sit on a skewed grid. */
const slots = [0, 1, 2].flatMap((row) =>
  Array.from({ length: 9 }, (_, col) => ({
    x: 401 + row * 22 + col * 12.3,
    y: 458 + row * 12 - col * 2.6,
  })).filter(({ x, y }) => x < 545 && y > 440)
);

function Strut({ d }: { d: string }) {
  return <path d={d} fill="#aab3c5" stroke="#20242c" strokeWidth=".8" />;
}

function Model() {
  return (
    <svg viewBox="203 80 477 442" className="h-full w-full" role="img" aria-label="Sheet metal stand">
      <defs>
        <linearGradient id="bend" x1="0" y1="1" x2="0.5" y2="0">
          <stop offset="0" stopColor="#6a707d" />
          <stop offset="1" stopColor="#9ca3b1" />
        </linearGradient>
        <clipPath id="lowerPlate">
          <path d="M374 459l9-12 49-7 83-3 27 12 16 9 9 9-10 10-89 16-37-4z" />
        </clipPath>
      </defs>

      <g stroke="#20242c" strokeLinejoin="round">
        <path d="M374 459v2l57 30 37 4 89-16 10-10v-2l-10 8-89 16-37-3z" fill="#666d7c" strokeWidth=".7" />
        <path d="M374 459l9-12 49-7 83-3 27 12 16 9 9 9-10 10-89 16-37-4z" fill="#9aa1b0" strokeWidth=".8" />
        <g clipPath="url(#lowerPlate)" strokeLinecap="round">
          {slots.map(({ x, y }) => (
            <g key={`${x}-${y}`}>
              <path d={`M${x - 8} ${y - 4}L${x + 8} ${y + 4}`} strokeWidth="4.600" />
              <path d={`M${x - 7.5} ${y - 3.3}L${x + 8} ${y + 4.300}`} stroke="#fff" strokeWidth="3.200" />
            </g>
          ))}
        </g>
        <path d="M384 416v30l16 3v-27z" fill="#b9c2d8" strokeWidth=".9" />
        <path d="M391 447l2-15 5 15M388 447l14-1 8 4-12 3zM459 483l9 2v6l-10-3zM532 474l9-1v5l-9 1z" fill="#828a9a" strokeWidth=".8" />
        <path d="M468 444h16v45l-16 3zM541 432h16v44l-16 2z" fill="#bac3da" strokeWidth="1" />

        <path d="M376 413v3l59 28 30 3 91-14 11-11v-3l-11 10-91 14-30-2z" fill="#6e7585" strokeWidth=".8" strokeDasharray="1.500 .8" />
        <path
          d="M376 413l9-12 15-3 63-10 17-1 32 3 30 10 7 9 18 11-11 12-91 13-30-3z"
          fill="#9ba2b1"
          strokeWidth=".8"
        />
        <ellipse cx="474" cy="416" rx="20" ry="7" fill="#fff" strokeWidth="1" />
        <path d="M458 412l2-1 14-1v12l-16-2z" fill="#b9c2d8" strokeWidth=".6" />
        <path d="M466 419l2 2h-3z" fill="#555" strokeWidth=".6" />
        <path d="M494 407l17-5 18 10-22 3zM483 431l22-5 17 5-22 3z" fill="#fff" strokeWidth=".9" />
        <path d="M456 431l3-9 12 9-15 3z" fill="#8d95a5" strokeWidth=".7" />
        <g fill="#262a33" stroke="none">
          <circle cx="470" cy="391" r="1" /><circle cx="478" cy="390" r="1" />
          <circle cx="464" cy="441" r="1" /><circle cx="472" cy="440" r="1" />
          <circle cx="539" cy="429" r="1" /><circle cx="546" cy="428" r="1" />
          <circle cx="388" cy="454" r="1" /><circle cx="403" cy="471" r="1" />
          <circle cx="412" cy="475" r="1" /><circle cx="525" cy="433" r="1.200" />
          <circle cx="493" cy="485" r="1.200" /><circle cx="524" cy="480" r="1.200" />
        </g>
      </g>

      <g fill="#bcc5d8" stroke="#20242c" strokeWidth=".8" strokeLinejoin="round">
        <path d="M512 386h3v11h-3zM516 388h3v11h-3zM520 390h4v9h-4z" />
        <path d="M463 363l59 15 18 10v4l-8 1-70-17z" fill="#929aaa" />
        <path d="M464 366l58 15M470 372l62 17M522 378v4l10 7 8-1" fill="none" />
        <path d="M462 370l70 18 8 0v4l-8 1-70-18z" />
        <path d="M530 392h4v17l-4-3zM536 392h4v20l-4-2z" />
        <path d="M540 408l8 6-9-1" fill="#646b79" />
      </g>

      <g stroke="#171a20" strokeLinejoin="round">
        <path d="M532 168l-42 42 1-17c4-13 16-24 41-25z" fill="#bdc6dd" strokeWidth=".7" />
        <path
          d="M561 153l-4 5-34 5c-20 4-36 22-39 43l-36 227 8-2 34-222c3-22 16-39 36-42l30-3 1-6z"
          fill="#bdc6dd"
          strokeWidth=".8"
        />
        <path d="M492 206c3-19 14-32 32-36" fill="none" strokeWidth=".5" />
        <path d="M438 183l46 23-36 227-51-26z" fill="#6c7380" strokeWidth="1" />
        <path d="M480 139C460 142 442 160 438 183l46 23c3-21 19-39 39-43z" fill="url(#bend)" strokeWidth=".7" />
        <path d="M480 139l30-5.500 18 1.500 33 18-4 5-34 5z" fill="#a0a7b5" strokeWidth=".7" />
        <path d="M397 407l41-224c4-23 22-41 42-44l30-5.500M448 433l36-227c3-21 19-39 39-43l34-5 4-5" fill="none" strokeWidth="1.300" />
        <path d="M411 388l41 20" fill="none" strokeWidth=".7" />
      </g>

      <g fill="#fff" stroke="#171a20" strokeWidth=".8">
        <path d="M442 225.500l26 13.500-3 18-26-13zM435 261l7 3-6 40-7-3zM455 271l6 3-5 40-7-3zM425 319l26 13-2 18-26-13z" />
      </g>
      <path
        d="M441.500 226l-2.500 17M434.500 262l-6 38M454.500 272l-6 38M424.500 320l-2 16"
        fill="none"
        stroke="#171a20"
        strokeWidth="1.800"
        strokeDasharray="1 1"
      />
      <g fill="none" stroke="#30353f" strokeWidth=".6">
        <circle cx="425" cy="344" r=".7" /><circle cx="434" cy="349" r=".7" /><circle cx="443" cy="353" r=".7" />
        <circle cx="424" cy="349" r=".7" /><circle cx="433" cy="355" r=".7" /><circle cx="442" cy="360" r=".7" />
      </g>

      <path d="M409 360l12 5-2 11-14 42-11-5 12-39zM436 374l10 4-1 13-16 42-8-5 14-43z" fill="#5e6572" stroke="#171a20" />
      <Strut d="M409 360l3 1-2 13-14 39-3-1 13-38z" />
      <Strut d="M418 364l3 1-2 11-14 42-3-1 14-41z" />
      <Strut d="M436 374l3 1-1 12-14 40-3-1 13-41z" />
      <Strut d="M444 377l3 1-2 13-15 42-3-1 15-42z" />
      <path d="M411 373l6 3M437 385l7 3" stroke="#171a20" />
      <Strut d="M386 414l8-2v3l5 2 4-1 3 2-8 4-12-5z" />
      <Strut d="M412 428l8-2v4l5 2 3-1 2 3-9 2-9-5z" />

      <g strokeWidth="1.800">
        <path d="M229 490v-13" stroke="#2a30c9" />
        <path d="M226 479l3-7 3 7z" fill="#2a30c9" />
        <path d="M230 490l10-1.500" stroke="#1d5b2c" />
        <path d="M239 485.500l7 2.500-6 3z" fill="#1d5b2c" />
        <path d="M229 491l6 3" stroke="#b01919" />
        <path d="M236 491.500l3 5h-6z" fill="#b01919" />
        <circle cx="229" cy="491" r="1.500" fill="#7a1620" />
      </g>
      <g fontFamily="Liberation Sans, sans-serif" fontSize="7">
        <text x="226" y="471" fill="#7c80df">Z</text>
        <text x="245" y="489" fill="#7fae8a">Y</text>
        <text x="238" y="500" fill="#ea8f8f">X</text>
      </g>
    </svg>
  );
}

function ViewToolbar() {
  return (
    <div className="absolute top-[1px] right-[3px] flex h-[14px] items-center">
      {["zoomFit", "zoomArea", "prevView", "section", "dynamic"].map((name) => (
        <button key={name} aria-label={name} className="w-[14px]">
          <Glyph name={name} />
        </button>
      ))}
      {["display", "styleCube"].map((name) => (
        <button key={name} aria-label={name} className="flex w-[21px] items-center gap-1">
          <Glyph name={name} />
          <Caret />
        </button>
      ))}
      <button aria-label="Hide and show items" className="mr-px flex h-[14px] border border-[#b5b5b5]">
        <span className="flex w-[14px] items-center justify-center bg-[#bdbdbd]"><Glyph name="eye" /></span>
        <span className="flex w-[6px] items-center justify-center bg-white"><Caret /></span>
      </button>
      <button aria-label="Edit appearance" className="w-[14px]"><Glyph name="ball" /></button>
      <button aria-label="Apply scene"><Glyph name="scene" /></button>
    </div>
  );
}

export default function App() {
  return (
    <div className="flex h-screen flex-col overflow-hidden bg-white font-['Open_Sans',sans-serif]">
      <TitleBar />
      <Ribbon />
      <CommandTabs />
      <div className="flex min-h-0 flex-1">
        <div className="flex w-[203px] shrink-0 border-r-2 border-[#cdcdcd] bg-[#f7f7f7]">
          <ToolStrips />
          <FeatureTree />
        </div>
        <main className="relative min-w-0 flex-1">
          <Model />
          <ViewToolbar />
          <button
            aria-label="Collapse panel"
            className="absolute top-[203px] left-0 flex h-[26px] w-[6px] items-center justify-center border border-l-0 border-[#c4c4c4] bg-[#f7f7f7]"
          >
            <span className="size-[3px] rounded-full bg-[#a5a5a5]" />
          </button>
        </main>
      </div>
    </div>
  );
}
